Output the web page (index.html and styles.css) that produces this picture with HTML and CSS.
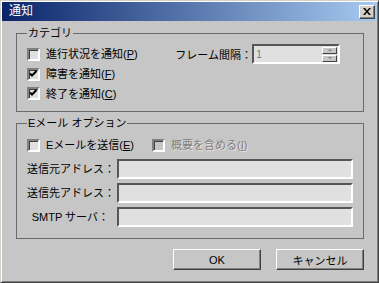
FILE: index.html
```html
<!DOCTYPE html>
<html lang="ja">

<head>
    <meta charset="UTF-8">
    <title>通知</title>
    <link rel="stylesheet" href="styles.css">
</head>

<body>
    <div class="window">
        <div class="titlebar">
            <span class="title">通知</span>
            <button class="close" type="button">
                <svg width="8" height="7" viewBox="0 0 8 7">
                    <path d="M0 0h2l2 2.5L6 0h2L5 3.5 8 7H6L4 4.5 2 7H0l3-3.5z" fill="#000"/>
                </svg>
            </button>
        </div>

        <div class="content">
            <div class="group group-category">
                <div class="legend">カテゴリ</div>
                <div class="rows">
                    <div class="row">
                        <label class="check"><span class="box"></span><span>進行状況を通知(<u>P</u>)</span></label>
                        <div class="interval">
                            <span>フレーム間隔：</span>
                            <div class="spin">
                                <span class="spin-value">1</span>
                                <div class="spin-buttons">
                                    <span class="spin-btn"><i class="arrow up"></i></span>
                                    <span class="spin-btn"><i class="arrow down"></i></span>
                                </div>
                            </div>
                        </div>
                    </div>
                    <div class="row">
                        <label class="check"><span class="box checked">
                            <svg width="9" height="9" viewBox="0 0 9 9"><polyline points="1,3.5 3,5.5 7.5,1" fill="none" stroke="#000" stroke-width="2"/></svg>
                        </span><span>障害を通知(<u>F</u>)</span></label>
                    </div>
                    <div class="row row-last">
                        <label class="check"><span class="box checked">
                            <svg width="9" height="9" viewBox="0 0 9 9"><polyline points="1,3.5 3,5.5 7.5,1" fill="none" stroke="#000" stroke-width="2"/></svg>
                        </span><span>終了を通知(<u>C</u>)</span></label>
                    </div>
                </div>
            </div>

            <div class="group group-mail">
                <div class="legend">Eメール オプション</div>
                <div class="row mail-checks">
                    <label class="check"><span class="box"></span><span>Eメールを送信(<u>E</u>)</span></label>
                    <label class="check disabled"><span class="box"></span><span>概要を含める(<u>I</u>)</span></label>
                </div>
                <div class="fields">
                    <span class="field-label">送信元アドレス：</span>
                    <div class="field"></div>
                    <span class="field-label">送信先アドレス：</span>
                    <div class="field"></div>
                    <span class="field-label">SMTP サーバ：</span>
                    <div class="field"></div>
                </div>
            </div>

            <div class="buttons">
                <button type="button" class="btn">OK</button>
                <button type="button" class="btn">キャンセル</button>
            </div>
        </div>
    </div>
</body>

</html>
```

FILE: styles.css
```css
body {
    margin: 0;
    font-family: "Liberation Sans", "Noto Sans CJK JP", sans-serif;
    font-size: 11px;
    color: #000;
    background: #c6c6c6;
}

.window {
    width: 379px;
    height: 283px;
    box-sizing: border-box;
    overflow: hidden;
    background: #c6c6c6;
    border: 1px solid;
    border-color: #d4d0c8 #404040 #404040 #d4d0c8;
    box-shadow: inset 1px 1px #fff, inset -1px -1px #808080;
    padding: 1px;
}

.titlebar {
    height: 19px;
    display: flex;
    align-items: center;
    justify-content: space-between;
    padding: 0 2px 0 7px;
    background: linear-gradient(to right, #0a246a, #a6caf0);
}

.title {
    color: #fff;
    font-size: 12px;
    line-height: 19px;
}

.close {
    width: 16px;
    height: 14px;
    padding: 0;
    display: flex;
    align-items: center;
    justify-content: center;
    background: #d4d0c8;
    border: 1px solid;
    border-color: #fff #404040 #404040 #fff;
    box-shadow: inset -1px -1px #808080;
}

.content {
    padding: 12px 13px 0 14px;
}

.group {
    border: 1px solid #6b6b6b;
    padding: 0 10px;
}

.legend {
    width: fit-content;
    height: 14px;
    margin: -8px 0 0 0;
    padding: 0 1px;
    line-height: 14px;
    background: #c6c6c6;
    white-space: nowrap;
}

.group-category .rows {
    margin-top: 4px;
    padding-bottom: 8px;
}

.row {
    height: 20px;
    display: flex;
    align-items: center;
    white-space: nowrap;
}

.row-last {
    height: 19px;
}

.check {
    display: flex;
    align-items: center;
    gap: 6px;
    line-height: 14px;
}

.box {
    width: 9px;
    height: 9px;
    display: flex;
    background: #e0e0e0;
    border: 2px solid;
    border-color: #808080 #fff #fff #808080;
    box-shadow: inset 1px 1px #404040;
}

.disabled {
    color: #808080;
    text-shadow: 1px 1px #e4e4e4;
}

.disabled .box {
    background: #c6c6c6;
}

.interval {
    margin-left: auto;
    margin-right: 13px;
    display: flex;
    align-items: center;
}

.spin {
    width: 88px;
    height: 20px;
    box-sizing: border-box;
    display: flex;
    align-items: center;
    justify-content: space-between;
    background: #e0e0e0;
    border: 2px solid;
    border-color: #555 #fff #fff #555;
    padding: 0 1px 0 2px;
}

.spin-value {
    color: #808080;
    line-height: 14px;
}

.spin-buttons {
    display: flex;
    flex-direction: column;
    gap: 1px;
}

.spin-btn {
    width: 15px;
    height: 7px;
    box-sizing: border-box;
    display: flex;
    align-items: center;
    justify-content: center;
    background: #c6c6c6;
    border: 1px solid;
    border-color: #fff #404040 #404040 #fff;
}

.arrow {
    width: 0;
    height: 0;
    border-left: 2px solid transparent;
    border-right: 2px solid transparent;
}

.arrow.up {
    border-bottom: 2px solid #808080;
}

.arrow.down {
    border-top: 2px solid #808080;
}

.group-mail {
    margin-top: 11px;
    padding-bottom: 11px;
}

.mail-checks {
    margin-top: 5px;
    gap: 18px;
}

.fields {
    margin-top: 4px;
    display: grid;
    grid-template-columns: 82px 1fr;
    grid-auto-rows: 20px;
    column-gap: 8px;
    row-gap: 4px;
    align-items: center;
}

.field-label {
    text-align: right;
    line-height: 14px;
    white-space: nowrap;
}

.field {
    height: 20px;
    box-sizing: border-box;
    background: #e0e0e0;
    border: 2px solid;
    border-color: #555 #fff #fff #555;
}

.buttons {
    margin-top: 10px;
    display: flex;
    justify-content: flex-end;
    gap: 15px;
}

.btn {
    width: 88px;
    height: 21px;
    padding: 0;
    font: inherit;
    background: #c6c6c6;
    border: 1px solid;
    border-color: #fff #404040 #404040 #fff;
    box-shadow: inset -1px -1px #808080;
}
```
